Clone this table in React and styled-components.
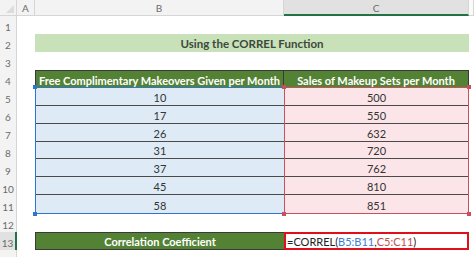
import React from "react";
import styled, { createGlobalStyle, css } from "styled-components";

const Global = createGlobalStyle`
  html, body { margin: 0; padding: 0; background: #fff; }
  body { font-family: "Lato", "Open Sans", sans-serif; overflow: hidden; }
`;

const Sheet = styled.div`
  display: grid;
  grid-template-columns: 17px 18px 249px 185px 1fr;
  grid-template-rows: 16px repeat(13, 18px) 1fr;
  width: 474px;
  height: 257px;
  background: #fff;
  font-family: "Lato", "Open Sans", sans-serif;
`;

const Corner = styled.div`
  grid-row: 1;
  grid-column: 1;
  background: #f3f3f3;
  border-right: 1px solid #d6d6d6;
  border-bottom: 1px solid #d6d6d6;
  position: relative;
  &::after {
    content: "";
    position: absolute;
    right: 2px;
    bottom: 2px;
    border-left: 8px solid transparent;
    border-bottom: 8px solid #dcdcdc;
  }
`;

const ColHead = styled.div`
  grid-row: 1;
  grid-column: ${(p) => p.$col};
  display: flex;
  align-items: center;
  justify-content: center;
  font-size: 10px;
  color: #6b6b6b;
  background: ${(p) => (p.$selected ? "#e1e1e1" : p.$blank ? "#fafafa" : "#f3f3f3")};
  border-right: 1px solid #d6d6d6;
  border-bottom: ${(p) => (p.$selected ? "2px solid #217346" : "1px solid #d6d6d6")};
  box-sizing: border-box;
  padding-top: 1px;
`;

const RowHead = styled.div`
  grid-row: ${(p) => p.$row};
  grid-column: 1;
  display: flex;
  align-items: center;
  justify-content: center;
  padding-top: 3px;
  box-sizing: border-box;
  font-size: 10px;
  color: #6b6b6b;
  background: ${(p) => (p.$selected ? "#e1e1e1" : "#f3f3f3")};
  border-right: ${(p) => (p.$selected ? "2px solid #217346" : "1px solid #d6d6d6")};
`;

const Title = styled.div`
  grid-row: 3;
  grid-column: 3 / span 2;
  background: #c9e1b8;
  color: #3b4a3c;
  font-weight: 700;
  font-size: 11.5px;
  display: flex;
  align-items: center;
  justify-content: center;
  padding-top: 1px;
  box-sizing: border-box;
`;

const HeadCell = styled.div`
  grid-row: ${(p) => p.$row};
  grid-column: ${(p) => p.$col};
  background: #548235;
  color: #fff;
  font-weight: 700;
  font-size: 11px;
  display: flex;
  align-items: center;
  justify-content: center;
  box-sizing: border-box;
  border: 1px solid #3a3a3a;
  ${(p) => p.$joinLeft && css`border-left: none;`}
  ${(p) => p.$noBottom && css`border-bottom: none;`}
  padding-top: 1px;
`;

const Range = styled.div`
  grid-row: 6 / span 7;
  grid-column: ${(p) => p.$col};
  display: grid;
  grid-template-rows: repeat(7, 1fr);
  position: relative;
  box-sizing: border-box;
  border: 1px solid ${(p) => p.$color};
  border-top: none;
  background: ${(p) => p.$bg};
  ${(p) => p.$col === 3 && css`border-right: none;`}
`;

const RangeTop = styled.div`
  position: absolute;
  left: -1px;
  right: -1px;
  top: -1px;
  height: 1px;
  background: ${(p) => p.$color};
`;

const Handle = styled.span`
  position: absolute;
  width: 4px;
  height: 4px;
  background: ${(p) => p.$color};
  ${(p) => (p.$top ? "top: -3px;" : "bottom: -3px;")}
  ${(p) => (p.$left ? "left: -3px;" : "right: -3px;")}
  z-index: 2;
`;

const DataCell = styled.div`
  display: flex;
  align-items: center;
  justify-content: center;
  font-size: 11px;
  color: #333;
  padding-top: 2px;
  box-sizing: border-box;
  border-bottom: ${(p) => (p.$last ? "none" : "1px solid #4a4a4a")};
`;

const LabelCell = styled.div`
  grid-row: 14;
  grid-column: 3;
  background: #548235;
  color: #fff;
  font-weight: 700;
  font-size: 11px;
  display: flex;
  align-items: center;
  justify-content: center;
  border: 1px solid #3a3a3a;
  border-right: none;
  box-sizing: border-box;
  padding-top: 1px;
`;

const FormulaCell = styled.div`
  grid-row: 14;
  grid-column: 4;
  border: 2px solid #e0101a;
  box-sizing: border-box;
  display: flex;
  align-items: center;
  padding: 1px 0 0 1px;
  font-size: 11px;
  color: #222;
  white-space: nowrap;
`;

const Ref = styled.span`
  color: ${(p) => p.$color};
`;

const bData = [10, 17, 26, 31, 37, 45, 58];
const cData = [500, 550, 632, 720, 762, 810, 851];

const BLUE = "#2f75c9";
const RED = "#c9505e";

function RangeBlock({ col, color, bg, values }) {
  return (
    <Range $col={col} $color={color} $bg={bg}>
      <RangeTop $color={color} />
      <Handle $color={color} $top $left />
      <Handle $color={color} $left />
      {col === 4 && <Handle $color={color} $top />}
      {col === 4 && <Handle $color={color} />}
      {values.map((v, i) => (
        <DataCell key={i} $last={i === values.length - 1}>
          {v}
        </DataCell>
      ))}
    </Range>
  );
}

export default function App() {
  const rows = Array.from({ length: 13 }, (_, i) => i + 1);
  return (
    <>
      <Global />
      <Sheet>
        <Corner />
        <ColHead $col={2}>A</ColHead>
        <ColHead $col={3}>B</ColHead>
        <ColHead $col={4} $selected>C</ColHead>
        <ColHead $col={5} $blank />
        {rows.map((r) => (
          <RowHead key={r} $row={r + 1} $selected={r === 13}>
            {r}
          </RowHead>
        ))}
        <RowHead $row={15} />
        <Title>Using the CORREL Function</Title>
        <HeadCell $row={5} $col={3} $noBottom>
          Free Complimentary Makeovers Given per Month
        </HeadCell>
        <HeadCell $row={5} $col={4} $joinLeft $noBottom>
          Sales of Makeup Sets per Month
        </HeadCell>
        <RangeBlock col={3} color={BLUE} bg="#deebf7" values={bData} />
        <RangeBlock col={4} color={RED} bg="#fbe5e8" values={cData} />
        <LabelCell>Correlation Coefficient</LabelCell>
        <FormulaCell>
          =CORREL(<Ref $color="#3b7dd0">B5:B11</Ref>,<Ref $color="#c0504d">C5:C11</Ref>)
        </FormulaCell>
      </Sheet>
    </>
  );
}
